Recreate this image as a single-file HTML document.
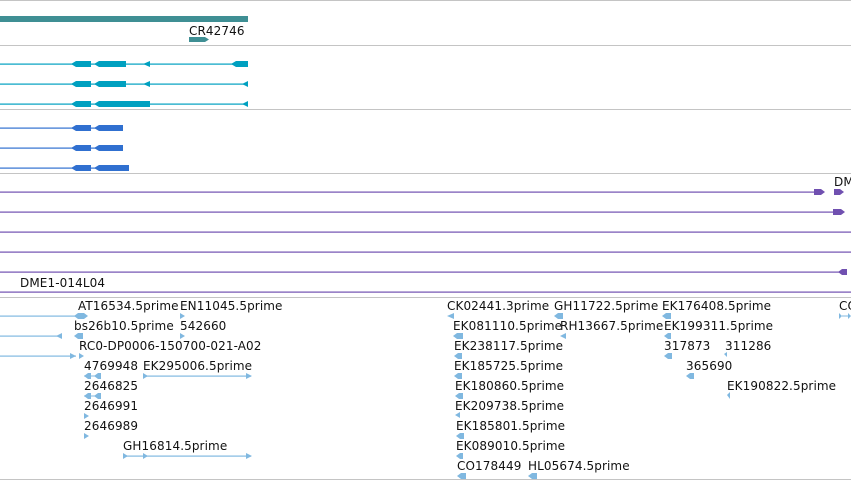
<!DOCTYPE html>
<html><head><meta charset="utf-8"><style>
html,body{margin:0;padding:0;background:#fff;width:851px;height:481px;overflow:hidden}
svg{display:block}
text{font-family:"DejaVu Sans","Liberation Sans",sans-serif;font-size:12px;fill:#111;letter-spacing:0.1px}
</style></head><body>
<svg width="851" height="481" viewBox="0 0 851 481" xmlns="http://www.w3.org/2000/svg">
<g fill="#c4c4c4">
<rect x="0" y="0" width="851" height="1"/>
<rect x="0" y="45" width="851" height="1"/>
<rect x="0" y="109" width="851" height="1"/>
<rect x="0" y="173" width="851" height="1"/>
<rect x="0" y="297" width="851" height="1"/>
<rect x="0" y="479" width="851" height="1"/>
</g>
<rect x="0" y="16" width="248" height="6" fill="#3f8f94"/>
<text x="189" y="35">CR42746</text>
<path d="M189 37H205L209 39.5L205 42H189Z" fill="#3f8f94"/>
<g fill="#00a0c0">
<rect x="0" y="63.5" width="248" height="1.2"/>
<rect x="0" y="83.5" width="248" height="1.2"/>
<rect x="0" y="103.5" width="248" height="1.2"/>
<path d="M71 64L76 61H91V67H76Z"/><path d="M94 64L99 61H126V67H99Z"/><path d="M143 64L150 61V67Z"/><path d="M231 64L236 61H248V67H236Z"/>
<path d="M71 84L76 81H91V87H76Z"/><path d="M94 84L99 81H126V87H99Z"/><path d="M143 84L150 81V87Z"/><path d="M242 84L248 81V87Z"/>
<path d="M71 104L76 101H91V107H76Z"/><path d="M94 104L99 101H150V107H99Z"/><path d="M242 104L248 101V107Z"/>
</g>
<g fill="#3070d0">
<rect x="0" y="127.5" width="123" height="1.2"/>
<rect x="0" y="147.5" width="123" height="1.2"/>
<rect x="0" y="167.5" width="129" height="1.2"/>
<path d="M71 128L76 125H91V131H76Z"/><path d="M94 128L99 125H123V131H99Z"/>
<path d="M71 148L76 145H91V151H76Z"/><path d="M94 148L99 145H123V151H99Z"/>
<path d="M71 168L76 165H91V171H76Z"/><path d="M94 168L99 165H129V171H99Z"/>
</g>
<g fill="#7050b0">
<rect x="0" y="191.5" width="820" height="1.2"/>
<rect x="0" y="211.5" width="840" height="1.2"/>
<rect x="0" y="231.5" width="851" height="1.2"/>
<rect x="0" y="251.5" width="851" height="1.2"/>
<rect x="0" y="271.5" width="840" height="1.2"/>
<rect x="0" y="291.5" width="851" height="1.2"/>
<path d="M814 189H821L825 192L821 195H814Z"/><path d="M834 189H840L844 192L840 195H834Z"/>
<path d="M833 209H841L845 212L841 215H833Z"/>
<path d="M838 272L842 269H847V275H842Z"/>
</g>
<text x="834" y="186">DME1</text>
<text x="20" y="287">DME1-014L04</text>
<g fill="#80b8e0">
<rect x="0" y="315.5" width="86" height="1.2"/>
<path d="M74 316L78 313H84L88 316L84 319H78Z"/>
<path d="M180 313L185 316L180 319Z"/>
<rect x="0" y="335.5" width="62" height="1.2"/>
<path d="M56 336L62 333V339Z"/><path d="M74 336L78 333H83V339H78Z"/>
<path d="M180 333L185 336L180 339Z"/>
<rect x="0" y="355.5" width="76" height="1.2"/>
<path d="M70 353L76 356L70 359Z"/><path d="M79 353L84 356L79 359Z"/>
<path d="M84 376L88 373H91V379H88Z"/><path d="M94 376L98 373H101V379H98Z"/><rect x="84" y="375.5" width="17" height="1"/>
<rect x="143" y="375.5" width="108" height="1.2"/><path d="M143 373L148 376L143 379Z"/><path d="M246 373L252 376L246 379Z"/>
<path d="M84 396L88 393H91V399H88Z"/><path d="M94 396L98 393H101V399H98Z"/><rect x="84" y="395.5" width="17" height="1"/>
<path d="M84 413L89 416L84 419Z"/>
<path d="M84 433L89 436L84 439Z"/>
<rect x="123" y="455.5" width="128" height="1.2"/><path d="M123 453L128 456L123 459Z"/><path d="M143 453L148 456L143 459Z"/><path d="M246 453L252 456L246 459Z"/>
<path d="M447 316L454 313V319Z"/><path d="M554 316L558 313H563V319H558Z"/><path d="M662 316L666 313H671V319H666Z"/><path d="M839 313L842 316L839 319Z M842 315.5H848V316.5H842Z M848 313L851 316L848 319Z"/>
<path d="M453 336L457 333H463V339H457Z"/><path d="M560 336L566 333V339Z"/><path d="M664 336L668 333H671V339H668Z"/>
<path d="M454 356L458 353H462V359H458Z"/><path d="M664 356L668 353H672V359H668Z"/><path d="M724 354L727 352V357Z"/>
<path d="M454 376L458 373H462V379H458Z"/><path d="M686 376L690 373H694V379H690Z"/>
<path d="M455 396L459 393H463V399H459Z"/><path d="M727 395L730 392V399Z"/>
<path d="M455 415L460 412V418Z"/>
<path d="M456 436L460 433H464V439H460Z"/>
<path d="M456 456L460 453H463V459H460Z"/>
<path d="M457 476L461 473H466V479H461Z"/><path d="M528 476L532 473H537V479H532Z"/>
</g>
<text x="78" y="310">AT16534.5prime</text>
<text x="180" y="310">EN11045.5prime</text>
<text x="74" y="330">bs26b10.5prime</text>
<text x="180" y="330">542660</text>
<text x="79" y="350">RC0-DP0006-150700-021-A02</text>
<text x="84" y="370">4769948</text>
<text x="143" y="370">EK295006.5prime</text>
<text x="84" y="390">2646825</text>
<text x="84" y="410">2646991</text>
<text x="84" y="430">2646989</text>
<text x="123" y="450">GH16814.5prime</text>
<text x="447" y="310">CK02441.3prime</text>
<text x="554" y="310">GH11722.5prime</text>
<text x="662" y="310">EK176408.5prime</text>
<text x="839" y="310">CO</text>
<text x="453" y="330">EK081110.5prime</text>
<text x="560" y="330">RH13667.5prime</text>
<text x="664" y="330">EK199311.5prime</text>
<text x="454" y="350">EK238117.5prime</text>
<text x="664" y="350">317873</text>
<text x="725" y="350">311286</text>
<text x="454" y="370">EK185725.5prime</text>
<text x="686" y="370">365690</text>
<text x="455" y="390">EK180860.5prime</text>
<text x="727" y="390">EK190822.5prime</text>
<text x="455" y="410">EK209738.5prime</text>
<text x="456" y="430">EK185801.5prime</text>
<text x="456" y="450">EK089010.5prime</text>
<text x="457" y="470">CO178449</text>
<text x="528" y="470">HL05674.5prime</text>
</svg>
</body></html>
